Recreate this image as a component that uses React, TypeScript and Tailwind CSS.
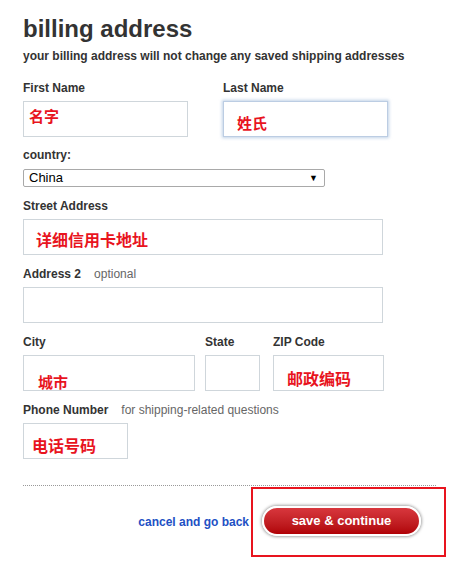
const sans = { fontFamily: '"Liberation Sans", Arial, sans-serif' };
const cjk = { fontFamily: '"Noto Sans CJK SC", "Liberation Sans", sans-serif' };

function Label({ children, note }: { children: React.ReactNode; note?: string }) {
  return (
    <div className="flex h-[14px] items-center text-[12px] leading-[14px] font-bold text-[#333]">
      <span>{children}</span>
      {note && <span className="font-normal text-[#666] ml-[13px]">{note}</span>}
    </div>
  );
}

function Field({
  w,
  text,
  px,
  py,
  size = 15,
  focus,
}: {
  w: string;
  text?: string;
  px?: string;
  py?: string;
  size?: number;
  focus?: boolean;
}) {
  return (
    <div
      className={`${w} h-[36px] mt-[6px] bg-white border ${
        focus ? "border-[#bccde3] shadow-[0_0_3px_1px_rgba(150,180,215,0.6)]" : "border-[#cfd6db]"
      } ${px ?? ""} ${py ?? ""}`}
    >
      {text && (
        <span
          className={`block leading-none font-bold text-[#e8141e] ${size === 16 ? "text-[16px]" : "text-[15px]"}`}
          style={cjk}
        >
          {text}
        </span>
      )}
    </div>
  );
}

export default function App() {
  return (
    <div className="min-h-[586px] w-[465px] bg-white pl-[23px] pt-[15px]" style={sans}>
      <h1 className="text-[24px] leading-[28px] font-bold text-[#333]">billing address</h1>
      <p className="mt-[6px] text-[12px] leading-[15px] font-bold text-[#333]">
        your billing address will not change any saved shipping addresses
      </p>

      {/* names */}
      <div className="flex mt-[17px]">
        <div className="w-[200px]">
          <Label>First Name</Label>
          <Field w="w-[165px]" text="名字" px="pl-[5px]" py="pt-[6px]" />
        </div>
        <div>
          <Label>Last Name</Label>
          <Field w="w-[165px]" text="姓氏" px="pl-[13px]" py="pt-[13px]" focus />
        </div>
      </div>

      {/* country */}
      <div className="mt-[11px]">
        <Label>country:</Label>
        <div className="mt-[7px] w-[302px] h-[18px] border border-[#a9a9a9] rounded-[2px] flex items-center justify-between pl-[5px] pr-[6px] text-[13px] text-black">
          <span>China</span>
          <span className="text-[9px] leading-none">▼</span>
        </div>
      </div>

      {/* street */}
      <div className="mt-[12px]">
        <Label>Street Address</Label>
        <Field w="w-[360px]" text="详细信用卡地址" px="pl-[12px]" py="pt-[11px]" size={16} />
      </div>

      {/* address 2 */}
      <div className="mt-[12px]">
        <Label note="optional">Address 2</Label>
        <Field w="w-[360px]" />
      </div>

      {/* city / state / zip */}
      <div className="flex mt-[12px]">
        <div className="w-[182px]">
          <Label>City</Label>
          <Field w="w-[172px]" text="城市" px="pl-[14px]" py="pt-[18px]" />
        </div>
        <div className="w-[68px]">
          <Label>State</Label>
          <Field w="w-[55px]" />
        </div>
        <div>
          <Label>ZIP Code</Label>
          <Field w="w-[111px]" text="邮政编码" px="pl-[13px]" py="pt-[14px]" size={16} />
        </div>
      </div>

      {/* phone */}
      <div className="mt-[12px]">
        <Label note="for shipping-related questions">Phone Number</Label>
        <Field w="w-[105px]" text="电话号码" px="pl-[8px]" py="pt-[13px]" size={16} />
      </div>

      {/* footer */}
      <div className="mt-[26px] w-[413px] border-t border-dotted border-[#999]" />
      <div className="flex items-center justify-end w-[423px] mt-[1px]">
        <a className="text-[12px] font-bold text-[#2250c4] mr-[2px]" href="#">
          cancel and go back
        </a>
        <div className="w-[195px] h-[70px] border-2 border-[#e8141e] pl-[9px] pt-[17px]">
          <button className="w-[159px] h-[30px] rounded-full border-2 border-white bg-gradient-to-b from-[#d8363d] to-[#b00005] shadow-[0_0_3px_1px_rgba(0,0,0,0.35)] text-white text-[13px] font-bold">
            save &amp; continue
          </button>
        </div>
      </div>
    </div>
  );
}
